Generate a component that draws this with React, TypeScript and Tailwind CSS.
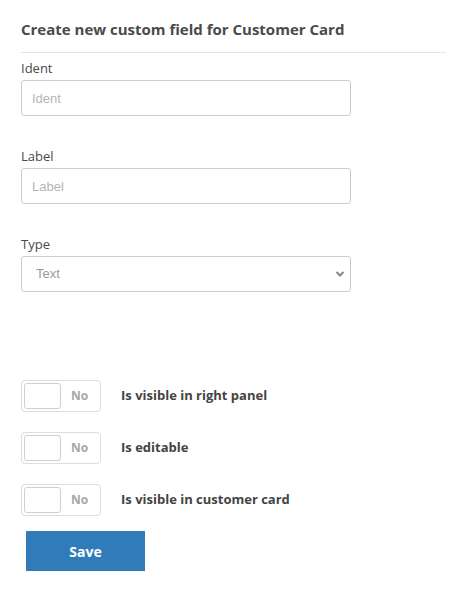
const fieldBox =
  "block w-[330px] h-[36px] rounded-[3px] border border-[#cccccc] bg-white px-[10px] text-[13px] text-[#555] outline-none placeholder:text-[#b5b5b5]";

const labelCls = "mb-[3px] h-[20px] pt-[2px] text-[13px] leading-[18px] text-[#4a4a4a]";

function Field({ label, placeholder }: { label: string; placeholder: string }) {
  return (
    <div className="mb-[29px]">
      <div className={labelCls}>{label}</div>
      <input className={fieldBox} style={{ fontFamily: "Arial, 'Liberation Sans', sans-serif" }} placeholder={placeholder} />
    </div>
  );
}

function Toggle({ label }: { label: string }) {
  return (
    <div className="flex h-[32px] items-center">
      <div className="flex h-[32px] w-[80px] items-center rounded-[4px] border border-[#dddddd] bg-white pl-[2px]">
        <div className="h-[26px] w-[37px] rounded-[3px] border border-[#cfcfcf] bg-white" />
        <span className="ml-[10px] text-[12px] font-bold text-[#a6a6a6]">No</span>
      </div>
      <span className="ml-[20px] text-[13px] font-bold text-[#444]">{label}</span>
    </div>
  );
}

export default function App() {
  return (
    <div className="h-[616px] w-[458px] bg-white" style={{ fontFamily: "'Open Sans', sans-serif" }}>
      <div className="ml-[21px] mr-[12px]">
        <h1 className="h-[53px] border-b border-[#e5e5e5] pt-[18px] text-[15px] font-bold leading-[22px] text-[#4a4a4a]">
          Create new custom field for Customer Card
        </h1>
        <div className="pt-[4px]">
          <Field label="Ident" placeholder="Ident" />
          <Field label="Label" placeholder="Label" />
          <div>
            <div className={labelCls}>Type</div>
            <div className="relative w-[330px]">
              <select
                className={fieldBox + " appearance-none pl-[14px] text-[#999]"}
                style={{ fontFamily: "Arial, 'Liberation Sans', sans-serif" }}
                defaultValue="text"
              >
                <option value="text">Text</option>
              </select>
              <svg className="pointer-events-none absolute right-[6px] top-[14px]" width="10" height="8" viewBox="0 0 10 8">
                <path d="M1.5 2 L5 5.5 L8.5 2" fill="none" stroke="#888" strokeWidth="2" />
              </svg>
            </div>
          </div>
        </div>
        <div className="mt-[88px] flex flex-col gap-[20px]">
          <Toggle label="Is visible in right panel" />
          <Toggle label="Is editable" />
          <Toggle label="Is visible in customer card" />
        </div>
        <button className="ml-[5px] mt-[15px] h-[40px] w-[119px] bg-[#317bb8] text-[14px] font-bold text-white">
          Save
        </button>
      </div>
    </div>
  );
}
